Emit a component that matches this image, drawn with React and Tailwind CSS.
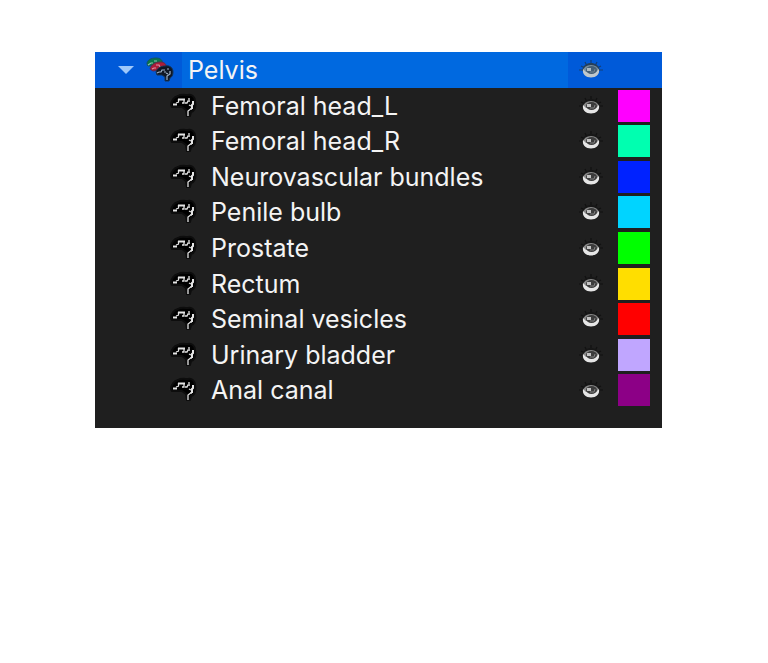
import React, { useState } from "react";

const structures = [
  { name: "Femoral head_L", swatch: "bg-[#ff00ff]" },
  { name: "Femoral head_R", swatch: "bg-[#00ffb0]" },
  { name: "Neurovascular bundles", swatch: "bg-[#0022ff]" },
  { name: "Penile bulb", swatch: "bg-[#00d4ff]" },
  { name: "Prostate", swatch: "bg-[#00ff00]" },
  { name: "Rectum", swatch: "bg-[#ffde00]" },
  { name: "Seminal vesicles", swatch: "bg-[#ff0000]" },
  { name: "Urinary bladder", swatch: "bg-[#c0a6ff]" },
  { name: "Anal canal", swatch: "bg-[#8c0086]" },
];

function StructureIcon() {
  return (
    <svg viewBox="0 0 30 28" className="h-7 w-[30px] shrink-0" aria-hidden="true">
      <path
        d="M2 13C2 9 5 5 9 4C12 2 16 3 19 3C23 2 26 5 26 9C27 13 26 17 24 19L22 20L21 24H18L17 18L13 15L7 15L3 15Z"
        fill="#000000"
        stroke="#0d0d0d"
        strokeWidth="2"
        strokeLinejoin="round"
      />
      <g fill="none" stroke="#e4e4e4">
        <path strokeWidth="2" d="M4 12.5H8M9 7.5H16" />
        <path strokeWidth="1.3" d="M7 11L10 10M9.5 7V10M15 8V11L13 11M16 11H18L19 9H21M20 8V6" />
        <path strokeWidth="2" d="M24 9V12L23 13V17" />
        <path strokeWidth="1.3" d="M20 13L22 14M23 16L19 19V24M21 17H23" />
      </g>
    </svg>
  );
}

function GroupIcon() {
  return (
    <svg viewBox="0 0 30 28" className="h-7 w-[30px] shrink-0" aria-hidden="true">
      <path d="M2 8C2 4 6 2 11 2C15 2 18 4 17 7L10 9L3 10Z" fill="#08764a" stroke="#155265" />
      <path d="M3 9L6 7H8M9 5H12" fill="none" stroke="#8cc3ae" strokeWidth="1.2" />
      <path d="M5 13C6 9 10 6 15 6C19 6 22 8 21 12L13 14L8 15Z" fill="#ad1d38" stroke="#63294c" />
      <path d="M7 13L9 12H11M11 9H14L15 11H17" fill="none" stroke="#d795a8" strokeWidth="1.2" />
      <path
        d="M11 16C12 12 16 10 20 10C25 9 28 12 28 16C28 19 27 21 25 22L24 25H20V21L17 19L12 19Z"
        fill="#101724"
        stroke="#163457"
      />
      <path
        d="M12 17L14 16H16L17 14H20M19 16H21M22 13H24M25 15V18L22 20V24M21 17L23 18"
        fill="none"
        stroke="#9eb2c9"
        strokeWidth="1.2"
      />
    </svg>
  );
}

function EyeIcon({ active = false }) {
  const white = active ? "#c0c8cc" : "#e6e6e6";
  const rim = active ? "#7b909f" : "#8a8a8a";
  const lash = active ? "#123e78" : "#111111";
  return (
    <svg viewBox="0 0 24 22" className="h-[22px] w-6" aria-hidden="true">
      <path
        d="M0 11H4M2 7L6 9M6 3L8 7M12 1V6M18 3L16 7M22 7L18 9M24 11H20"
        stroke={lash}
        strokeWidth="1.2"
      />
      <path d="M3 12C4 5 9 4 12 4C16 4 20 6 21 12Z" fill={active ? "#263f59" : "#171717"} />
      <ellipse cx="12" cy="12" rx="8" ry="6" fill={rim} />
      <path d="M4 10C3 15 7 18.5 12 18.5C17 18.5 21 15 20 10L17 13H7Z" fill={white} />
      <ellipse cx="12.5" cy="11" rx="5.5" ry="4" fill={active ? "#445e75" : "#3c3c3c"} />
      <path d="M11 13H15L16 10" fill="none" stroke={active ? "#73838f" : "#808080"} strokeWidth="1" />
      <path d="M8 9H12V12H8Z" fill={active ? "#aebbc4" : "#c4c4c4"} />
    </svg>
  );
}

function EyeCell({ name, active }) {
  return (
    <button
      type="button"
      aria-label={`Toggle visibility of ${name}`}
      className="flex w-[46px] shrink-0 items-center justify-center self-stretch"
    >
      <EyeIcon active={active} />
    </button>
  );
}

export default function App() {
  const [open, setOpen] = useState(true);

  return (
    <div className="min-h-screen bg-white pt-[52px] pr-[106px] pl-[95px] font-['Inter','Liberation_Sans',sans-serif] text-[25px] leading-8 text-[#f4f4f4]">
      <section aria-label="Structures" className="bg-[#1f1f1f] pb-5">
        <div className="flex h-9 bg-[#005ad9]">
          <button
            type="button"
            aria-expanded={open}
            onClick={() => setOpen(!open)}
            className="flex min-w-0 flex-1 items-center text-left"
          >
            <span className="flex w-[87px] shrink-0 items-center gap-[11px] pl-[23px]">
              <svg viewBox="0 0 16 9" className="h-[9px] w-4" aria-hidden="true">
                <path d="M0 0H16L8 8Z" fill="#9fc8fa" />
              </svg>
              <GroupIcon />
            </span>
            <span className="flex min-w-0 flex-1 items-center self-stretch bg-[#0069e0] pl-1.5">Pelvis</span>
          </button>
          <div className="flex w-[94px] shrink-0">
            <EyeCell name="Pelvis" active />
          </div>
        </div>
        {open && (
          <ul className="grid h-80 auto-rows-fr">
            {structures.map((item) => (
              <li key={item.name} className="flex items-center pr-3 pl-[74px]">
                <StructureIcon />
                <span className="min-w-0 flex-1 truncate pl-3">{item.name}</span>
                <EyeCell name={item.name} />
                <button
                  type="button"
                  aria-label={`Colour of ${item.name}`}
                  className={`ml-1 h-8 w-8 shrink-0 ${item.swatch}`}
                />
              </li>
            ))}
          </ul>
        )}
      </section>
    </div>
  );
}
